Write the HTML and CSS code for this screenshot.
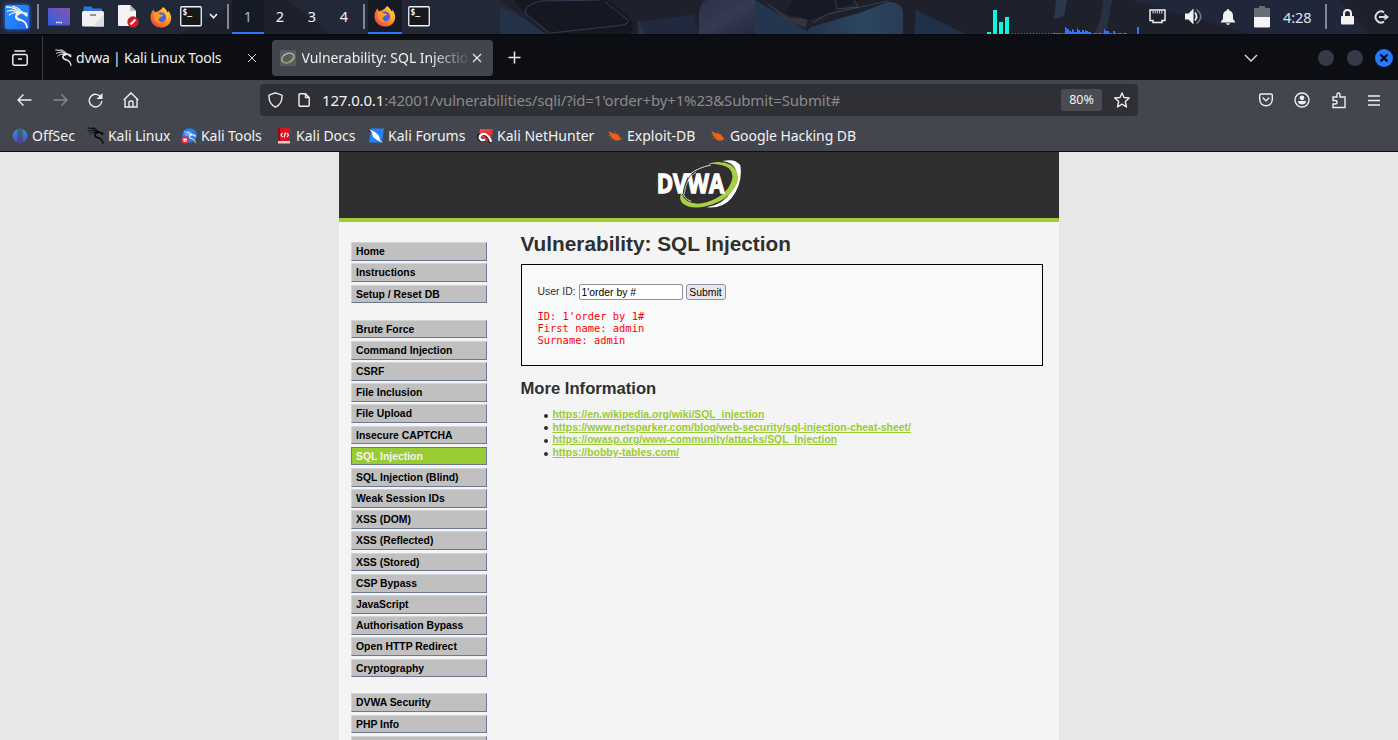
FILE: index.html
```
<!DOCTYPE html>
<html lang="en">
<head>
<meta charset="utf-8">
<title>Vulnerability: SQL Injection</title>
<link rel="stylesheet" href="styles.css">
</head>
<body>
<svg class="defs" width="0" height="0">
  <defs>
    <linearGradient id="gKali" x1="0" y1="0" x2="1" y2="1"><stop offset="0" stop-color="#1a9bff"/><stop offset="1" stop-color="#2a66f5"/></linearGradient>
    <linearGradient id="gDesk" x1="0" y1="1" x2="1" y2="0"><stop offset="0" stop-color="#2f5fe0"/><stop offset="1" stop-color="#8a52b0"/></linearGradient>
    <linearGradient id="gFox" x1="1" y1="0" x2="0" y2="1"><stop offset="0" stop-color="#ffe14a"/><stop offset=".5" stop-color="#ff8a2a"/><stop offset="1" stop-color="#f0304a"/></linearGradient>
    <linearGradient id="gOff" x1="0" y1="0" x2="0" y2="1"><stop offset="0" stop-color="#1fa5c0"/><stop offset="1" stop-color="#6a35e0"/></linearGradient>
    <linearGradient id="gRed" x1="0" y1="0" x2="1" y2="1"><stop offset="0" stop-color="#ff4a4a"/><stop offset="1" stop-color="#d81e24"/></linearGradient>
    <linearGradient id="gPane" x1="0" y1="0" x2="1" y2="1"><stop offset="0" stop-color="#2b3145"/><stop offset=".5" stop-color="#343b52"/><stop offset="1" stop-color="#242b3f"/></linearGradient>
    <linearGradient id="gSteel" x1="0" y1="0" x2="1" y2="0"><stop offset="0" stop-color="#24344e"/><stop offset=".6" stop-color="#2b4560"/><stop offset="1" stop-color="#2c3b55"/></linearGradient>
    <symbol id="dragon" viewBox="0 0 24 24">
      <g fill="none" stroke="currentColor" stroke-linecap="round">
        <path stroke-width="1.500" d="M1 1.500C7 1.500 12 3.500 16 8"/>
        <path stroke-width="1.300" d="M2 6C7 4 11 5 15 8M4 10C7 7 11 7 14 8.500M8 1C12 2 15 4 17 7"/>
        <path stroke-width="2.400" d="M12 7.500C17 6 20 8 22 10.500M14 8.500C9 10 11 14.500 15.500 15"/>
        <path stroke-width="1.800" d="M15 15C20 16 22 18.500 22.500 23M19 8L22.500 8.500"/>
      </g>
    </symbol>
    <symbol id="fox" viewBox="0 0 22 22">
      <path fill="url(#gFox)" d="M13 1C16 3 17 5 17.500 6.500L18.500 5C21 8 22 12 20.500 15.500C18.800 19.500 15 21.500 11 21.500C5 21.500.500 17 .500 11.500C.500 8 1.500 6 3.500 3.500L4.500 6L8 5.500C9.500 4 11.500 3.500 13 1Z"/>
      <circle cx="11" cy="11.500" r="5" fill="#4a63d8"/>
      <path fill="#ff9a2e" d="M4 7.500C7 6.500 9 7 10.500 8.500L13.500 9C12.500 11 10 10.500 9 12.500C8 14.500 9.500 16 12 16.500C8 18.500 4 15.500 4 11Z"/>
      <path fill="#ffc63a" d="M13 2C14 6 19 8 16.500 15.500C20 12 19 6 13 2Z"/>
    </symbol>
    <symbol id="term" viewBox="0 0 22 21">
      <rect x=".75" y=".75" width="20.500" height="19" rx="1" fill="#16181a" stroke="#f2f2f2" stroke-width="1.300"/>
      <text x="2.500" y="9" class="prompt">$_</text>
    </symbol>
    <symbol id="bug" viewBox="0 0 16 16">
      <path fill="#ec6312" d="M1.500 3.500Q4.500 3.500 5.500 5.500C9 4.500 12.500 7 14 11.500C10.500 13.500 7 12.500 5.500 10.500C3.500 9.500 3 6 1.500 3.500Z"/>
      <path stroke="#c05a1c" stroke-width=".6" d="M4 7.500L1 7.500M5.500 10L2.500 10.500M8 5.500L8.500 3M11 7L12.500 5.500M13 10H15.500" fill="none"/>
    </symbol>
  </defs>
</svg>

<header class="panel">
  <svg class="wallpaper" width="1398" height="34" viewBox="0 0 1398 34">
    <path fill="#263147" d="M0 0H240L180 34H0Z" opacity=".45"/>
    <path fill="#27344b" d="M288 0H500L545 34H330Z" opacity=".4"/>
    <path fill="#253650" d="M500 8L514 12L546 34H500Z" opacity=".7"/>
    <path fill="#161821" d="M514 0H607Q622 8 632 22Q637 30 628 34H552L522 10Z"/>
    <path fill="none" stroke="#36475f" stroke-width="1" d="M546 0Q524 4 525 13L549 33M546 1L600 0M605 2L628 20Q630 25 615 26L551 33" opacity=".8"/>
    <path fill="#2b415c" d="M638 21L652 22L645 34H638Z" opacity=".6"/>
    <path fill="#20293d" d="M640 22L694 14L699 34H645Z"/>
    <path fill="url(#gPane)" d="M706 0H755V34H699V14Q700 3 706 0Z"/>
    <path fill="#24354f" d="M755 0L812 34H755Z"/><path fill="#33343f" d="M762 0L790 18L808 18L806 28L786 20Z"/>
    <path fill="#171a24" d="M794 0H862L808 20L785 13Z"/>
    <path fill="url(#gSteel)" d="M811 27L862 12L888 2Q903 2 903 14V34H805Z"/>
    <path fill="none" stroke="#6a737e" stroke-width=".8" d="M812 23L828 14L888 1M835 0L837 9L858 7L854 0" opacity=".5"/>
    <path fill="#20304a" d="M916 10L965 34H914Z"/><path fill="#2b3850" d="M1056 0H1067L1064 16L1054 19Z"/>
    <path fill="#2a3449" d="M1094 34Q1102 22 1103 0H1112L1106 34Z" opacity=".8"/>
    <path fill="#222c45" d="M1130 0H1340L1370 34H1250Z" opacity=".6"/>
  </svg>
  <svg class="p-kali" width="26" height="26" viewBox="0 0 26 26"><rect x="1" y="1" width="24" height="24" rx="2" fill="url(#gKali)"/><use href="#dragon" x="1.500" y="1.500" width="23" height="23"/></svg>
  <i class="sep sep-a"></i>
  <svg class="p-desk" width="22" height="18" viewBox="0 0 22 18"><rect width="22" height="17.500" rx="1" fill="url(#gDesk)"/><path stroke="#fff" stroke-width="1.500" stroke-dasharray="1.500 .8" d="M8 14.500H14"/></svg>
  <svg class="p-files" width="22" height="21" viewBox="0 0 22 21"><path fill="#2f73e0" d="M1.500 8V1.500Q1.500.500 2.500.500H9L11 2.500H20V8Z"/><path fill="#f1f1f1" d="M0 6.500Q0 5 1.500 5H20.500Q22 5 22 6.500V19Q22 20.500 20.500 20.500H1.500Q0 20.500 0 19Z"/><path fill="#dedede" d="M22 8V20.500H11Z"/><path stroke="#777" stroke-width="1.500" d="M8 9H14"/></svg>
  <svg class="p-doc" width="21" height="23" viewBox="0 0 21 23"><path fill="#f3f3f3" d="M0 1Q0 0 1 0H12L18 6V20Q18 21 17 21H1Q0 21 0 20Z"/><path fill="#bbb" d="M12 0V6H18Z"/><circle cx="15" cy="17" r="5.700" fill="#cf1f25"/><path stroke="#fff" stroke-width="2" d="M12.500 19.500L17.500 14.500"/></svg>
  <svg class="p-fox" width="22" height="22"><use href="#fox" width="22" height="22"/></svg>
  <svg class="p-term" width="22" height="21"><use href="#term" width="22" height="21"/></svg>
  <svg class="p-chev" width="9" height="7" viewBox="0 0 9 7"><path fill="none" stroke="#eee" stroke-width="1.700" d="M1 1L4.500 4.800L8 1"/></svg>
  <i class="sep sep-b"></i>
  <nav class="spaces"><span class="on">1</span><span>2</span><span>3</span><span>4</span></nav>
  <i class="sep sep-c"></i>
  <span class="task"><svg width="22" height="22"><use href="#fox" width="22" height="22"/></svg></span>
  <svg class="p-term2" width="22" height="21"><use href="#term" width="22" height="21"/></svg>
  <svg class="graph" width="154" height="34" viewBox="0 0 154 34">
    <path fill="#0ff5e0" d="M0 32h4v2h-4zM6 10h4v24h-4zM12 22h4v12h-4zM18 17h4v17h-4z"/>
    <path fill="#2777ff" d="M78 27h1v7h-1zM79 28h1v6h-1zM80 29h2v5h-2zM82 31h2v3h-2zM84 32h1v2h-1zM85 29h1v5h-1zM86 30h1v4h-1zM87 32h3v2h-3zM90 28h1v6h-1zM91 30h2v4h-2zM93 32h2v2h-2zM95 30h2v4h-2zM97 32h1v2h-1zM98 30h1v4h-1zM99 31h2v3h-2zM101 32h3v2h-3zM117 29h1v5h-1zM118 31h4v3h-4zM126 31h2v3h-2zM150 27h2v7h-2z"/>
    <path stroke="#2777ff" stroke-dasharray="1 2" d="M25 33.500H78"/><path stroke="#2777ff" stroke-dasharray="4 1" d="M66 33.500H141"/>
  </svg>
  <svg class="p-net" width="17" height="15" viewBox="0 0 17 15"><path fill="none" stroke="#eee" stroke-width="1.500" d="M1 1H16V11.500H13V13.500H4V11.500H1Z"/><path stroke="#ddd" stroke-dasharray="1 1.200" stroke-width="3" d="M3.500 3H14"/></svg>
  <svg class="p-vol" width="18" height="17" viewBox="0 0 18 17"><path fill="#f2f2f2" d="M0 5.500H3.500L8.500.500V16.500L3.500 11.500H0Z"/><path fill="none" stroke="#eee" stroke-width="1.800" d="M10 4.500Q13 8.500 10 12.500"/><path fill="none" stroke="#777b85" stroke-width="1.500" d="M11.500 1.500Q20 8.500 11.500 15.500"/></svg>
  <svg class="p-bell" width="14" height="16" viewBox="0 0 14 16"><path fill="#f2f2f2" d="M7 0Q8.300 0 8.300 1.500Q12 2.500 12 7V10L14 12.500V13.500H0V12.500L2 10V7Q2 2.500 5.700 1.500Q5.700 0 7 0ZM5 14.300H9Q8.500 16 7 16Q5.500 16 5 14.300Z"/></svg>
  <svg class="p-bat" width="16" height="22" viewBox="0 0 16 22"><path fill="#696d76" d="M5 0H11V2H15Q16 2 16 3V11H0V3Q0 2 1 2H5Z"/><path fill="#f4f4f4" d="M0 11H16V20.500Q16 21.500 15 21.500H1Q0 21.500 0 20.500Z"/></svg>
  <span class="clock">4:28</span>
  <i class="sep sep-d"></i>
  <svg class="p-lock" width="13" height="16" viewBox="0 0 13 16"><rect y="7" width="13" height="8.500" rx="1" fill="#f2f2f2"/><path fill="none" stroke="#f2f2f2" stroke-width="2" d="M3 8V4.500Q3 1 6.500 1Q10 1 10 4.500V8"/></svg>
  <svg class="p-out" width="15" height="14" viewBox="0 0 15 14"><path fill="none" stroke="#ddd" stroke-width="2" d="M10 2.300A5.500 5.500 0 1 0 10 11.700M5 7H12"/><path fill="#ddd" d="M10.500 3.500L15 7L10.500 10.500Z"/></svg>
</header>

<div class="tabs">
  <svg class="t-view" width="16" height="16" viewBox="0 0 16 16"><path fill="none" stroke="#eee" stroke-width="1.500" stroke-linecap="round" d="M3 1H13M2.500 4.500H13.500Q15.200 4.500 15.200 6V13.500Q15.200 15.200 13.500 15.200H2.500Q.8 15.200.8 13.500V6Q.8 4.500 2.500 4.500ZM6.500 9H9.500"/></svg>
  <i class="t-line"></i>
  <svg class="t-fav" width="17" height="17"><use href="#dragon" width="17" height="17"/></svg>
  <span class="t-title">dvwa | Kali Linux Tools</span>
  <svg class="t-x" width="10" height="10" viewBox="0 0 10 10"><path stroke="#ddd" d="M1 1L9 9M9 1L1 9"/></svg>
  <div class="tab">
    <svg class="fav" width="16" height="16" viewBox="0 0 16 16"><rect width="16" height="16" rx="1" fill="#595b5e"/><g fill="none" transform="rotate(-22 8 8)"><ellipse cx="8" cy="8" rx="6.500" ry="4.500" stroke="#b5bbb5" stroke-width="1.200"/><path stroke="#87a348" d="M2 10Q7 15 13 9"/></g></svg>
    <span class="tab-title">Vulnerability: SQL Injection</span>
    <svg width="10" height="10" viewBox="0 0 10 10"><path stroke="#eee" stroke-width="1.100" d="M1 1L9 9M9 1L1 9"/></svg>
  </div>
  <svg class="t-plus" width="13" height="13" viewBox="0 0 13 13"><path stroke="#eee" stroke-width="1.500" d="M6.500.500V12.500M.500 6.500H12.500"/></svg>
  <svg class="t-chev" width="14" height="8" viewBox="0 0 14 8"><path fill="none" stroke="#ddd" stroke-width="1.400" d="M1 1L7 7L13 1"/></svg>
  <i class="dot"></i><i class="dot"></i>
  <svg class="t-close" width="18" height="18" viewBox="0 0 18 18"><circle cx="9" cy="9" r="9" fill="#2777ff"/><path stroke="#0b1020" stroke-width="2.400" d="M5.500 5.500L12.500 12.500M12.500 5.500L5.500 12.500"/></svg>
</div>

<div class="toolbar">
  <div class="nav">
    <svg width="15" height="12" viewBox="0 0 15 12"><path class="ln" d="M14.500 6H1M6.500.500L1 6L6.500 11.500"/></svg>
    <svg class="n-fwd" width="15" height="12" viewBox="0 0 15 12"><path class="ln" d="M.500 6H14M8.500.500L14 6L8.500 11.500"/></svg>
    <svg class="n-rel" width="15" height="15" viewBox="0 0 15 15"><path class="ln" d="M13 4.500A6.300 6.300 0 1 0 13.800 8"/><path fill="#eee" d="M14.500 0V6H8.500Z"/></svg>
    <svg class="n-home" width="16" height="16" viewBox="0 0 16 16"><path class="ln" d="M.8 8L8 .9L15.200 8M2 7V15H14V7M6 15V10.500Q6 9 8 9Q10 9 10 10.500V15"/></svg>
    <div class="url">
      <svg width="15" height="16" viewBox="0 0 15 16"><path class="ln" d="M7.500.8L14 3.200Q14.500 12 7.500 15.200Q.500 12 1 3.200Z"/></svg>
      <svg class="u-page" width="12" height="14" viewBox="0 0 12 14"><path class="ln" d="M1 2Q1 .8 2.200.8H7.500L11.200 4.500V12Q11.200 13.200 10 13.200H2.200Q1 13.200 1 12ZM7.500.8V4.500H11.200"/></svg>
      <span class="addr"><b>127.0.0.1</b>:42001/vulnerabilities/sqli/?id=1'order+by+1%23&amp;Submit=Submit#</span>
      <span class="zoom">80%</span>
      <svg class="u-star" width="16" height="16" viewBox="0 0 16 16"><path class="ln" stroke-linejoin="round" d="M8 1L10 5.500L15.300 6L11.300 9.500L12.500 15L8 12.200L3.500 15L4.700 9.500L.7 6L6 5.500Z"/></svg>
    </div>
    <svg class="n-pocket" width="14" height="14" viewBox="0 0 14 14"><path class="ln" d="M2 1H12Q13.300 1 13.300 2.300V6.500A6.300 6.300 0 0 1 .7 6.500V2.300Q.7 1 2 1ZM3.700 4.800L7 7.800L10.300 4.800"/></svg>
    <svg class="n-user" width="16" height="16" viewBox="0 0 16 16"><circle class="ln" cx="8" cy="8" r="7"/><circle cx="8" cy="5.800" r="2.400" fill="#eee"/><path fill="#eee" d="M3.800 9H12.200Q11.500 12.500 8 12.500Q4.500 12.500 3.800 9Z"/></svg>
    <svg class="n-ext" width="14" height="17" viewBox="0 0 14 17"><path class="ln" d="M1 5H5V3Q5 1 6.500 1Q8 1 8 3V5H13V15.500H1V12H3Q5 12 5 10.200Q5 8.500 3 8.500H1Z"/></svg>
    <svg class="n-menu" width="12" height="11" viewBox="0 0 12 11"><path class="ln" d="M0 1H12M0 5.500H12M0 10H12"/></svg>
  </div>
  <div class="marks">
    <a class="m1"><svg width="16" height="16" viewBox="0 0 16 16"><path fill="url(#gOff)" d="M5.500 1V14.500Q.5 12 .5 7.500Q1 3 5.500 1ZM6.500 .800H7.500V15.500L6.500 15ZM8.700.800H9.500V15L8.700 15.500ZM10.500 1Q15 3 15.500 7.500Q15.500 12 10.500 14.500Z"/></svg>OffSec</a>
    <a class="m2"><svg width="17" height="17"><use href="#dragon" width="17" height="17"/></svg>Kali Linux</a>
    <a class="m3"><svg width="16" height="16" viewBox="0 0 16 16"><circle cx="8.500" cy="7.500" r="7.300" fill="#277df2"/><use href="#dragon" x="3" y="3" width="12" height="12"/><circle cx="4" cy="12" r="3.800" fill="#e02b35"/><path stroke="#fff" stroke-width="1.100" fill="none" d="M2 11H6M3.200 11V14M5 11V14"/></svg>Kali Tools</a>
    <a class="m4"><svg width="16" height="16" viewBox="0 0 16 16"><path fill="#d9151d" d="M3 0H14V13H3Z"/><path fill="#8c1118" d="M2 0H4V15H2Z"/><path fill="#e8caca" d="M2 13H14V15.500H2Z"/><path fill="none" stroke="#fff" stroke-width="1.200" d="M6.500 5L5 7L6.500 9M8 9.500L9.500 4.500M11 5L12.500 7L11 9"/></svg>Kali Docs</a>
    <a class="m5"><svg width="16" height="16" viewBox="0 0 16 16"><path fill="#2482fa" d="M3 .500H16L14 14.500H1Z"/><path fill="#fff" d="M.500 1L7 4L11 8L12 12L15 15L9 12L5 9L4 5Z"/><path fill="#111" d="M0 0L4 5L2 4Z"/></svg>Kali Forums</a>
    <a class="m6"><svg width="16" height="16" viewBox="0 0 16 16"><path fill="url(#gRed)" d="M3 1H16L14 14L8 12L2 7Z"/><path fill="none" stroke="#111" stroke-width="2.600" d="M13 15Q13 9 7 6Q.5 5.500 1.500 10Q4 14.500 8 12"/><path fill="none" stroke="#fff" stroke-width="2.200" d="M14 14Q12.500 8 8 6Q2.500 5.500 2.500 10Q4.500 13.500 8 11.500"/></svg>Kali NetHunter</a>
    <a class="m7"><svg width="16" height="16"><use href="#bug" width="16" height="16"/></svg>Exploit-DB</a>
    <a class="m8"><svg width="16" height="16"><use href="#bug" width="16" height="16"/></svg>Google Hacking DB</a>
  </div>
</div>

<div class="page">
  <div class="container">
    <div class="banner">
      <svg width="86" height="50" viewBox="50 28 258 150">
        <path fill="#fff" d="M250 31Q288 22 303 44Q311 98 277 142Q250 174 202 170Q255 160 277 120Q300 75 287 52Q278 35 250 31Z"/>
        <path fill="#a7cf45" d="M205 39Q245 28 275 43Q302 64 295 93Q276 140 222 160Q160 182 129 158Q117 143 126 128Q137 158 174 159Q232 154 265 114Q291 76 270 54Q254 39 205 39Z"/>
        <path fill="none" stroke="#fff" stroke-width="2.500" d="M215 43Q135 60 128 116Q130 143 155 152"/>
        <text x="52" y="128" textLength="203" lengthAdjust="spacingAndGlyphs" class="brand">DVWA</text>
        <path fill="none" stroke="#2f2f2f" stroke-width="3" d="M167 64Q136 83 132 128"/>
        <path fill="none" stroke="#fff" stroke-width="2" d="M170 64Q139 84 135 130"/>
      </svg>
    </div>
    <div class="cols">
      <div class="menu">
        <ul><li>Home</li><li>Instructions</li><li>Setup / Reset DB</li></ul>
        <ul><li>Brute Force</li><li>Command Injection</li><li>CSRF</li><li>File Inclusion</li><li>File Upload</li><li>Insecure CAPTCHA</li><li class="selected">SQL Injection</li><li>SQL Injection (Blind)</li><li>Weak Session IDs</li><li>XSS (DOM)</li><li>XSS (Reflected)</li><li>XSS (Stored)</li><li>CSP Bypass</li><li>JavaScript</li><li>Authorisation Bypass</li><li>Open HTTP Redirect</li><li>Cryptography</li></ul>
        <ul><li>DVWA Security</li><li>PHP Info</li><li></li></ul>
      </div>
      <main class="body">
        <h1>Vulnerability: SQL Injection</h1>
        <div class="vuln">
          <form><label>User ID:</label><input type="text" value="1'order by #"><button type="button">Submit</button></form>
          <pre>ID: 1'order by 1#
First name: admin
Surname: admin</pre>
        </div>
        <h2>More Information</h2>
        <ul class="links">
          <li><a>https://en.wikipedia.org/wiki/SQL_injection</a></li>
          <li><a>https://www.netsparker.com/blog/web-security/sql-injection-cheat-sheet/</a></li>
          <li><a>https://owasp.org/www-community/attacks/SQL_Injection</a></li>
          <li><a>https://bobby-tables.com/</a></li>
        </ul>
      </main>
    </div>
  </div>
</div>
</body>
</html>
```
FILE: styles.css
```
* { box-sizing: border-box; }
html, body { height: 740px; overflow: hidden; }
body { margin: 0; display: flex; flex-direction: column; font-family: "Noto Sans", sans-serif; font-size: 14px; color: #f2f2f2; }
svg { display: block; flex: none; }
.defs { position: absolute; }
i { display: block; flex: none; }

/* Desktop panel */
.panel { position: relative; flex: none; height: 35px; display: flex; align-items: center; padding-bottom: 1px; background: #1e212c; border-bottom: 1px solid #08090c; }
.wallpaper { position: absolute; left: 0; top: 0; }
.panel > :not(.wallpaper) { position: relative; }
.sep { width: 2px; height: 25px; background: #85878e; }
.p-kali { margin-left: 4px; filter: drop-shadow(0 0 2px #2777ff); }
.sep-a { margin-left: 7px; }
.p-desk { margin-left: 9px; }
.p-files { margin-left: 12px; }
.p-doc { margin-left: 14px; }
.p-fox { margin-left: 11px; }
.p-term { margin-left: 8px; }
.p-chev { margin-left: 7px; }
.sep-b { margin-left: 9px; }
.prompt { font: bold 8px "DejaVu Sans Mono", monospace; fill: #fff; }
.spaces { display: flex; margin-left: 3px; align-self: stretch; margin-bottom: -1px; font-size: 14.5px; line-height: 33px; }
.spaces span { width: 32px; text-align: center; }
.spaces .on { background: #161a25; border-bottom: 2px solid #2777ff; color: #8fbce8; }
.sep-c { margin-left: 3px; }
.task { margin-left: 3px; width: 34px; align-self: stretch; margin-bottom: -1px; display: flex; align-items: center; justify-content: center; background: #161a25; border-bottom: 2px solid #2777ff; }
.p-term2 { margin-left: 6px; }
.graph { margin: 0 8px -1px auto; }
.p-vol { margin-left: 19px; }
.p-bell { margin-left: 18px; }
.p-bat { margin-left: 19px; }
.clock { margin-left: 13px; width: 31px; white-space: nowrap; color: #d8e2f2; font-size: 14.5px; letter-spacing: -.1px; }
.sep-d { margin-left: 11px; }
.p-lock { margin-left: 14px; }
.p-out { margin: 0 9px 0 20px; }

/* Tab strip */
.tabs { flex: none; height: 45px; display: flex; align-items: center; background: #0c0e13; color: #eee; }
.t-view { margin-left: 12px; }
.t-line { margin-left: 14px; width: 1px; height: 44px; background: #3c3e43; }
.t-fav { margin-left: 12px; color: #eee; }
.t-title { margin-left: 4px; width: 171px; white-space: nowrap; letter-spacing: -.22px; }
.tab { margin-left: 15px; width: 221px; height: 36px; padding: 0 11px 0 8px; display: flex; align-items: center; border-radius: 4px; background: #42454c; }
.tab-title { margin-left: 5.5px; width: 166px; margin-right: 4.5px; overflow: hidden; white-space: nowrap; letter-spacing: -.04px; -webkit-mask-image: linear-gradient(90deg, #000 78%, transparent); mask-image: linear-gradient(90deg, #000 78%, transparent 102%); }
.t-plus { margin-left: 15px; }
.t-chev { margin: 0 60px 0 auto; }
.dot { width: 16px; height: 16px; margin-right: 13px; border-radius: 50%; background: #363a47; }
.t-close { margin: 0 5px 0 -1px; }

/* Toolbar */
.toolbar { flex: none; height: 72px; background: #43464e; border-bottom: 1px solid #0c0e13; }
.ln { fill: none; stroke: #eee; stroke-width: 1.4; }
.nav { height: 40px; display: flex; align-items: center; padding: 0 18px 0 17px; }
.n-fwd { margin-left: 21px; opacity: .4; }
.n-rel { margin-left: 20px; }
.n-home { margin-left: 20px; }
.url { margin-left: 121px; width: 878px; height: 32px; padding: 0 8px; display: flex; align-items: center; background: #2f3036; border-radius: 4px; }
.u-page { margin-left: 15px; }
.addr { margin-left: 12px; flex: 1; white-space: nowrap; font-size: 15px; letter-spacing: -.155px; color: #898a8e; }
.addr b { font-weight: 400; color: #f4f4f4; }
.zoom { width: 41px; height: 22px; border-radius: 3px; background: #4b4c52; font-size: 12.5px; line-height: 22px; text-align: center; }
.u-star { margin-left: 12px; }
.n-pocket { margin-left: auto; }
.n-user { margin-left: 21px; }
.n-ext { margin-left: 22px; }
.n-menu { margin: 0 0 0 22px; }
.marks { height: 31px; display: grid; grid-template-columns: 75px 94px 95px 92px 109px 130px 103px 200px; padding-left: 12px; }
.marks a { display: flex; align-items: center; gap: 4px; white-space: nowrap; }
.m2 svg { color: #060606; }
.m2, .m3, .m8 { letter-spacing: -.07px; }

/* DVWA page */
.page { flex: 1; min-height: 0; overflow: hidden; background: #e7e7e7; font-family: "Liberation Sans", Arial, sans-serif; font-size: 10.4px; color: #2f2f2f; }
.container { width: 720px; margin: 0 auto; background: #f4f4f4; }
.banner { height: 70px; display: flex; justify-content: center; padding-top: 8px; background: #2f2f2f; border-bottom: 4px solid #a1cc33; }
.brand { font: bold 80px "Open Sans", sans-serif; fill: #fff; stroke: #fff; stroke-width: 4px; }
.cols { display: flex; padding-left: 12px; }
.menu { width: 136px; padding-top: 20.3px; }
.menu ul { list-style: none; margin: 0 0 16.1px; padding: 0; }
.menu li { height: 18.8px; margin-bottom: 2.4px; padding-left: 4px; line-height: 17px; font-weight: 700; color: #000; background: #c0c0c0; border: 1px solid #d4d4d4; border-color: #d4d4d4 #6c7791 #6c7791 #d4d4d4; white-space: nowrap; }
.menu .selected { background: #9c3; color: #f4f4f4; border-color: #6c7791; }
.body { margin-left: 33.5px; width: 522.2px; padding-top: 9px; }
h1 { margin: 0; font-size: 20.8px; line-height: 26px; }
.vuln { height: 102px; margin: 7px 0 0; padding: 19px 16px; border: 1px solid #000; background: #f8fafa; }
form { display: flex; align-items: center; }
label { width: 41px; line-height: 14px; padding-bottom: 1px; white-space: nowrap; }
input { width: 104px; height: 16px; padding: 0 2px; border: 1px solid #8f8f9d; border-radius: 2px; font: 10.4px "Liberation Sans", sans-serif; background: #fff; color: #000; }
button { width: 40px; height: 16px; margin-left: 3px; padding: 0; border: 1px solid #8f8f9d; border-radius: 3px; background: #e9e9ed; color: #000; font: 10.4px "Liberation Sans", sans-serif; }
pre { margin: 10px 0 0; font: 10.4px/12px "DejaVu Sans Mono", monospace; letter-spacing: .02px; color: #f00; }
h2 { margin: 13px 0 0; font-size: 16.64px; line-height: 20px; }
.links { margin: 10px 0 0; padding: 0 0 0 32px; list-style: none; }
.links li { display: flex; align-items: center; line-height: 12.6px; }
.links li::before { content: ""; width: 4px; height: 4px; margin: 1px 5px 0 -9px; border-radius: 50%; background: #2f2f2f; }
.links a { font-weight: 700; letter-spacing: .012px; color: #9c3; text-decoration: underline; }
```
